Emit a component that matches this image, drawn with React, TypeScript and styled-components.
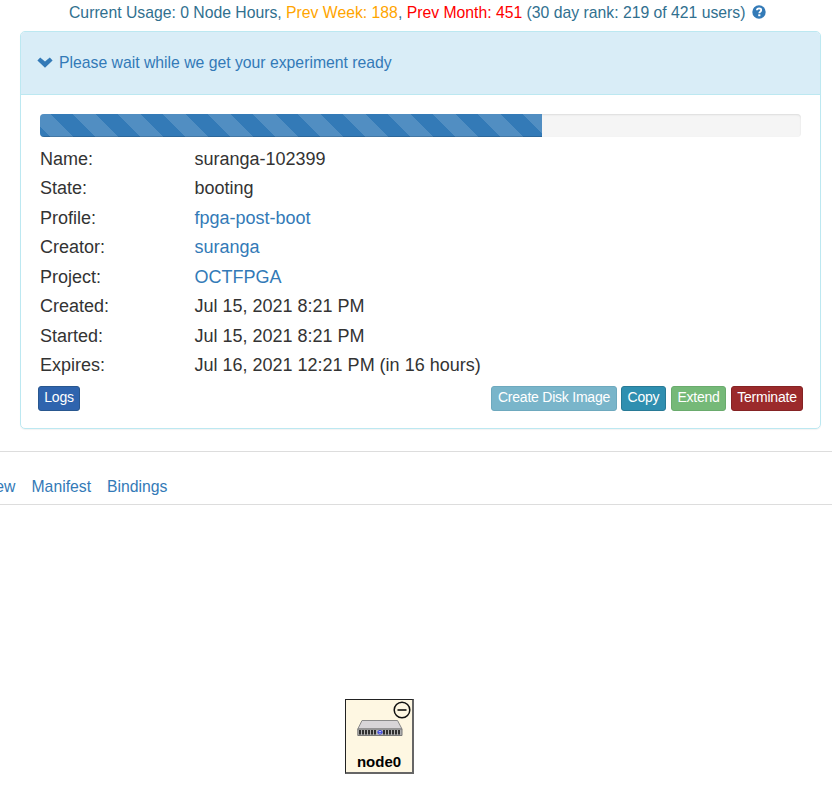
import React from "react";
import styled, { createGlobalStyle } from "styled-components";

const GlobalStyle = createGlobalStyle`
  *, *::before, *::after { box-sizing: border-box; }
  body { margin: 0; background: #fff; }
`;

const Page = styled.div`
  width: 832px;
  height: 801px;
  overflow: hidden;
  background: #fff;
  color: #333;
  font-family: "Liberation Sans", Arial, sans-serif;
  font-size: 15.75px;
  white-space: nowrap;
`;

const Usage = styled.div`
  display: flex;
  align-items: center;
  height: 31px;
  padding: 0 0 6px 69px;
  color: #31708f;
`;

const UsageText = styled.span`
  white-space: pre;
`;

const Tone = styled.span<{ $color: string }>`
  color: ${(p) => p.$color};
`;

const HelpIcon = styled.svg`
  margin: -1px 0 0 6.5px;
  width: 14px;
  height: 14px;
`;

const Panel = styled.section`
  width: 801px;
  height: 398px;
  margin-left: 20px;
  border: 1px solid #bce8f1;
  border-radius: 5px;
  box-shadow: 0 1px 1px rgba(0, 0, 0, 0.05);
`;

const PanelHeading = styled.header`
  display: flex;
  align-items: center;
  height: 63px;
  padding-left: 16px;
  background: #d9edf7;
  border-bottom: 1px solid #bce8f1;
  border-radius: 4px 4px 0 0;
  color: #337ab7;
`;

const Chevron = styled.svg`
  width: 16px;
  height: 11px;
  margin: -2px 6px 0 0;
`;

const HeadingText = styled.a`
  color: #337ab7;
`;

const PanelBody = styled.div`
  padding: 19px 17px 0;
`;

const Track = styled.div`
  width: 761px;
  height: 23px;
  margin-left: 2px;
  overflow: hidden;
  background: #f5f5f5;
  border-radius: 4px;
  box-shadow: inset 0 1px 2px rgba(0, 0, 0, 0.1);
`;

const Bar = styled.div`
  width: 502px;
  height: 100%;
  background-color: #337ab7;
  background-image: linear-gradient(
    45deg,
    rgba(255, 255, 255, 0.15) 25%,
    transparent 25%,
    transparent 50%,
    rgba(255, 255, 255, 0.15) 50%,
    rgba(255, 255, 255, 0.15) 75%,
    transparent 75%,
    transparent
  );
  background-size: 45px 45px;
  background-position: -12px 0;
  box-shadow: inset 0 -1px 0 rgba(0, 0, 0, 0.15);
`;

const Details = styled.dl`
  display: grid;
  grid-template-columns: 154.5px 1fr;
  grid-auto-rows: 29.5px;
  align-items: center;
  margin: 7.5px 0 0 2px;
  font-size: 18px;
`;

const Term = styled.dt``;

const Value = styled.dd`
  margin: 0;
`;

const Link = styled.a`
  color: #337ab7;
`;

const Actions = styled.div`
  display: flex;
  justify-content: space-between;
  margin-top: 5.5px;
`;

const ButtonGroup = styled.div`
  display: flex;
  gap: 5px;
`;

const Button = styled.button<{ $bg: string; $border: string; $width: number }>`
  width: ${(p) => p.$width}px;
  height: 25px;
  padding: 0 0 3px;
  border: 1px solid ${(p) => p.$border};
  border-radius: 3px;
  background: ${(p) => p.$bg};
  color: #fff;
  font: 14px/20px "Liberation Sans", Arial, sans-serif;
  letter-spacing: -0.23px;
  white-space: nowrap;

  &:first-child:not(:only-child) {
    margin-right: -1px;
  }
`;

const Tabs = styled.nav`
  display: flex;
  align-items: center;
  gap: 16px;
  height: 54px;
  margin-top: 22px;
  padding-top: 18px;
  border-top: 1px solid #ddd;
  border-bottom: 1px solid #ddd;
`;

const Tab = styled.a<{ $clipped?: boolean }>`
  color: #337ab7;
  ${(p) => (p.$clipped ? "width: 15.5px; display: flex; justify-content: flex-end;" : "")}
`;

const Topology = styled.main`
  padding: 194px 0 0 345px;
`;

const Node = styled.figure`
  display: flex;
  flex-direction: column;
  align-items: center;
  position: relative;
  width: 69px;
  height: 75px;
  margin: 0;
  padding-top: 20px;
  background: #fef7e2;
  border: 1px solid #333;
  border-width: 1px 2px 2px 1px;
  border-color: #222 #666 #666 #222;
`;

const Collapse = styled.svg`
  position: absolute;
  top: 1px;
  right: 1px;
  width: 18px;
  height: 18px;
`;

const Server = styled.svg`
  width: 46px;
  height: 18px;
  margin-left: 1px;
`;

const NodeName = styled.figcaption`
  margin: 15px 0 0 0;
  color: #000;
  font: 700 15px/17px "Liberation Sans", Arial, sans-serif;
`;

const rows: { term: string; value: string; link?: boolean }[] = [
  { term: "Name:", value: "suranga-102399" },
  { term: "State:", value: "booting" },
  { term: "Profile:", value: "fpga-post-boot", link: true },
  { term: "Creator:", value: "suranga", link: true },
  { term: "Project:", value: "OCTFPGA", link: true },
  { term: "Created:", value: "Jul 15, 2021 8:21 PM" },
  { term: "Started:", value: "Jul 15, 2021 8:21 PM" },
  { term: "Expires:", value: "Jul 16, 2021 12:21 PM (in 16 hours)" },
];

const vents = [2, 5, 8, 11, 14, 17, 26, 29, 32, 35, 38, 41];

export default function App() {
  return (
    <Page>
      <GlobalStyle />
      <Usage>
        <UsageText>
          Current Usage: 0 Node Hours, <Tone $color="#ffa500">Prev Week: 188</Tone>,{" "}
          <Tone $color="#f00">Prev Month: 451</Tone> (30 day rank: 219 of 421 users)
        </UsageText>
        <HelpIcon viewBox="0 0 14 14">
          <circle cx="7" cy="7" r="6.7" fill="#337ab7" />
          <path d="M4.9 5.2Q5 3.3 7.1 3.3Q9.3 3.4 9.2 5.1Q9.1 6.2 8 6.9Q7.3 7.4 7.3 8.3" fill="none" stroke="#fff" strokeWidth="1.8" />
          <path d="M6.2 9.3h2.2v1.9H6.2z" fill="#fff" />
        </HelpIcon>
      </Usage>

      <Panel>
        <PanelHeading>
          <Chevron viewBox="0 0 16 11">
            <path d="M0.4 3.4L3.2 0.6L8 4.6L12.8 0.6L15.6 3.4L8 10.7Z" fill="#337ab7" />
          </Chevron>
          <HeadingText>Please wait while we get your experiment ready</HeadingText>
        </PanelHeading>
        <PanelBody>
          <Track>
            <Bar />
          </Track>
          <Details>
            {rows.map((r) => (
              <React.Fragment key={r.term}>
                <Term>{r.term}</Term>
                <Value>{r.link ? <Link>{r.value}</Link> : r.value}</Value>
              </React.Fragment>
            ))}
          </Details>
          <Actions>
            <Button $bg="#2f64ae" $border="#29578f" $width={42}>Logs</Button>
            <ButtonGroup>
              <Button $bg="#79b5ca" $border="#6ea9be" $width={126}>Create Disk Image</Button>
              <Button $bg="#2f8fb0" $border="#287a96" $width={45}>Copy</Button>
              <Button $bg="#75b978" $border="#6aab6d" $width={55}>Extend</Button>
              <Button $bg="#9b2a2b" $border="#852324" $width={72}>Terminate</Button>
            </ButtonGroup>
          </Actions>
        </PanelBody>
      </Panel>

      <Tabs>
        <Tab $clipped>ew</Tab>
        <Tab>Manifest</Tab>
        <Tab>Bindings</Tab>
      </Tabs>

      <Topology>
        <Node>
          <Collapse viewBox="0 0 18 18">
            <circle cx="9" cy="9" r="7.8" fill="none" stroke="#111" strokeWidth="1.5" />
            <path d="M4.5 9h9" stroke="#111" strokeWidth="1.6" />
          </Collapse>
          <Server viewBox="0 0 46 18">
            <path d="M5 0.5H40.5L45 9H0.8Z" fill="#d8d5d8" stroke="#8a8a8a" />
            <path d="M0.8 9H45V15.5H0.8Z" fill="#b2b2b2" stroke="#777" />
            {vents.map((x) => (
              <path key={x} d={`M${x + 1} 10V14.5`} stroke="#222" strokeWidth="1.8" />
            ))}
            <ellipse cx="23" cy="12.3" rx="2.2" ry="1.8" fill="#fff" stroke="#2a35d8" />
            <path d="M21 12.3h4" stroke="#2a35d8" />
          </Server>
          <NodeName>node0</NodeName>
        </Node>
      </Topology>
    </Page>
  );
}
